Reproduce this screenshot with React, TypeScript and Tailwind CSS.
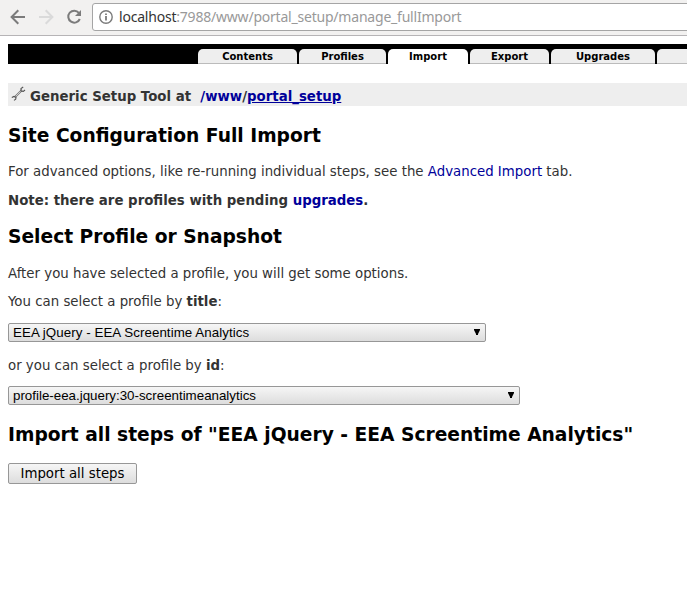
import React from "react";

const tabs = [
  { label: "Contents", box: "w-[99px]" },
  { label: "Profiles", box: "w-[87px]" },
  { label: "Import", box: "w-[80px]", active: true },
  { label: "Export", box: "w-[79px]" },
  { label: "Upgrades", box: "w-[104px]" },
  { label: "", box: "w-[40px]" },
];

function BrowserBar() {
  return (
    <header className="flex h-9 shrink-0 items-start border-b border-[#b6b4b6] bg-[#f2f1f0] pt-[3px]">
      <svg className="h-7 w-[92px] shrink-0" viewBox="0 0 92 28" fill="none" strokeWidth="2">
        <path d="M25 14H12M18.3 7.3L11.6 14L18.3 20.7" stroke="#7b7b7b" />
        <path d="M39 14H52M45.7 7.3L52.4 14L45.7 20.7" stroke="#dadada" />
        <path d="M78.9 9.8A6 6 0 1 0 79.8 16" stroke="#7b7b7b" />
        <path d="M81 7V13H75Z" fill="#7b7b7b" />
      </svg>
      <div className="-mr-2 flex h-7 flex-1 items-center rounded-[3px] border border-[#a5a5a5] bg-white pl-[6px]">
        <svg className="h-[14px] w-[14px] shrink-0" viewBox="0 0 14 14" fill="none">
          <circle cx="7" cy="7" r="6.2" stroke="#7b7b7b" strokeWidth="1.4" />
          <path d="M7 6V10.5M7 3.4V4.9" stroke="#7b7b7b" strokeWidth="1.8" />
        </svg>
        <span className="ml-[6px] whitespace-nowrap font-['Noto_Sans',sans-serif] text-[14px] leading-[26px] tracking-[-0.21px] text-[#999]">
          <span className="text-[#333]">localhost</span>:7988/www/portal_setup/manage_fullImport
        </span>
      </div>
    </header>
  );
}

function Tabs() {
  return (
    <nav className="flex h-5 gap-[2px] overflow-hidden bg-black pl-[190px] pt-[5px] text-[10px] font-bold leading-[15px] text-black">
      {tabs.map((t) => (
        <div
          key={t.box}
          className={`${t.box} shrink-0 rounded-t-[5px] text-center ${t.active ? "bg-white" : "border-b border-[#bbb] bg-[#eee]"}`}
        >
          {t.label}
        </div>
      ))}
    </nav>
  );
}

function Select({ text, box, spacing }: { text: string; box: string; spacing: string }) {
  return (
    <div
      className={`${box} flex h-[19px] items-center justify-between rounded-[2px] border border-[#979797] bg-linear-to-b from-[#f6f6f6] to-[#dddddd] pl-1 pr-[5px] text-black`}
    >
      <span className={`${spacing} font-['Liberation_Sans',Arial,sans-serif] text-[13.33px] leading-[17px]`}>{text}</span>
      <svg className="mb-[2px] h-[6px] w-[6px]" viewBox="0 0 6 6">
        <path d="M0 0H6V1L4 5V6H2V5L0 1Z" fill="#000" />
      </svg>
    </div>
  );
}

const h2 = "whitespace-nowrap text-[18.67px] font-bold leading-6 text-black";
const p = "whitespace-nowrap leading-[18px]";
const link = "text-[#00009a]";

export default function App() {
  return (
    <div className="h-[601px] w-[687px] overflow-hidden bg-white font-['DejaVu_Sans',Verdana,sans-serif] text-[13.33px] text-[#333]">
      <BrowserBar />
      <main className="pl-2 pt-2">
        <Tabs />
        <div className="mt-[19px] flex h-[23px] items-center bg-[#eee] font-bold">
          <svg className="mb-[2px] ml-[3px] h-4 w-4" viewBox="0 0 16 16" fill="none">
            <path d="M4 11L11 4" stroke="#777" strokeWidth="2" />
            <path d="M4.5 10.5L10.8 4.2" stroke="#ddd" strokeWidth=".8" />
            <path d="M12.2 1L10 2.5V5L12.3 5.5L14 4M.8 11.5L3 10.4L5 11.5L4.7 13.2L3 14.4" stroke="#555" strokeWidth="1.1" />
          </svg>
          <span className="ml-[3px] whitespace-pre pt-[5px] leading-[18px]">
            Generic Setup Tool at{"  "}
            <span className={link}>/www</span>/<span className="text-[#00009a] underline">portal_setup</span>
          </span>
        </div>
        <h2 className={`${h2} mt-[18px]`}>Site Configuration Full Import</h2>
        <p className={`${p} mt-[15px]`}>
          For advanced options, like re-running individual steps, see the <span className={link}>Advanced Import</span> tab.
        </p>
        <p className={`${p} mt-[11px] font-bold`}>
          Note: there are profiles with pending <span className={link}>upgrades</span>.
        </p>
        <h2 className={`${h2} mt-[15px]`}>Select Profile or Snapshot</h2>
        <p className={`${p} mt-[16px]`}>After you have selected a profile, you will get some options.</p>
        <p className={`${p} mt-[10px]`}>
          You can select a profile by <b>title</b>:
        </p>
        <div className="mt-[12px]">
          <Select text="EEA jQuery - EEA Screentime Analytics" box="w-[478px]" spacing="tracking-[0.055px]" />
        </div>
        <p className={`${p} mt-[15px]`}>
          or you can select a profile by <b>id</b>:
        </p>
        <div className="mt-[11px]">
          <Select text="profile-eea.jquery:30-screentimeanalytics" box="w-[512px]" spacing="tracking-normal" />
        </div>
        <h2 className={`${h2} mt-[18px]`}>Import all steps of "EEA jQuery - EEA Screentime Analytics"</h2>
        <button className="mt-[16px] block h-[21px] w-[129px] whitespace-nowrap rounded-[2px] border border-[#979797] bg-linear-to-b from-[#f6f6f6] to-[#dddddd] text-center leading-[18px] text-black">
          Import all steps
        </button>
      </main>
    </div>
  );
}
